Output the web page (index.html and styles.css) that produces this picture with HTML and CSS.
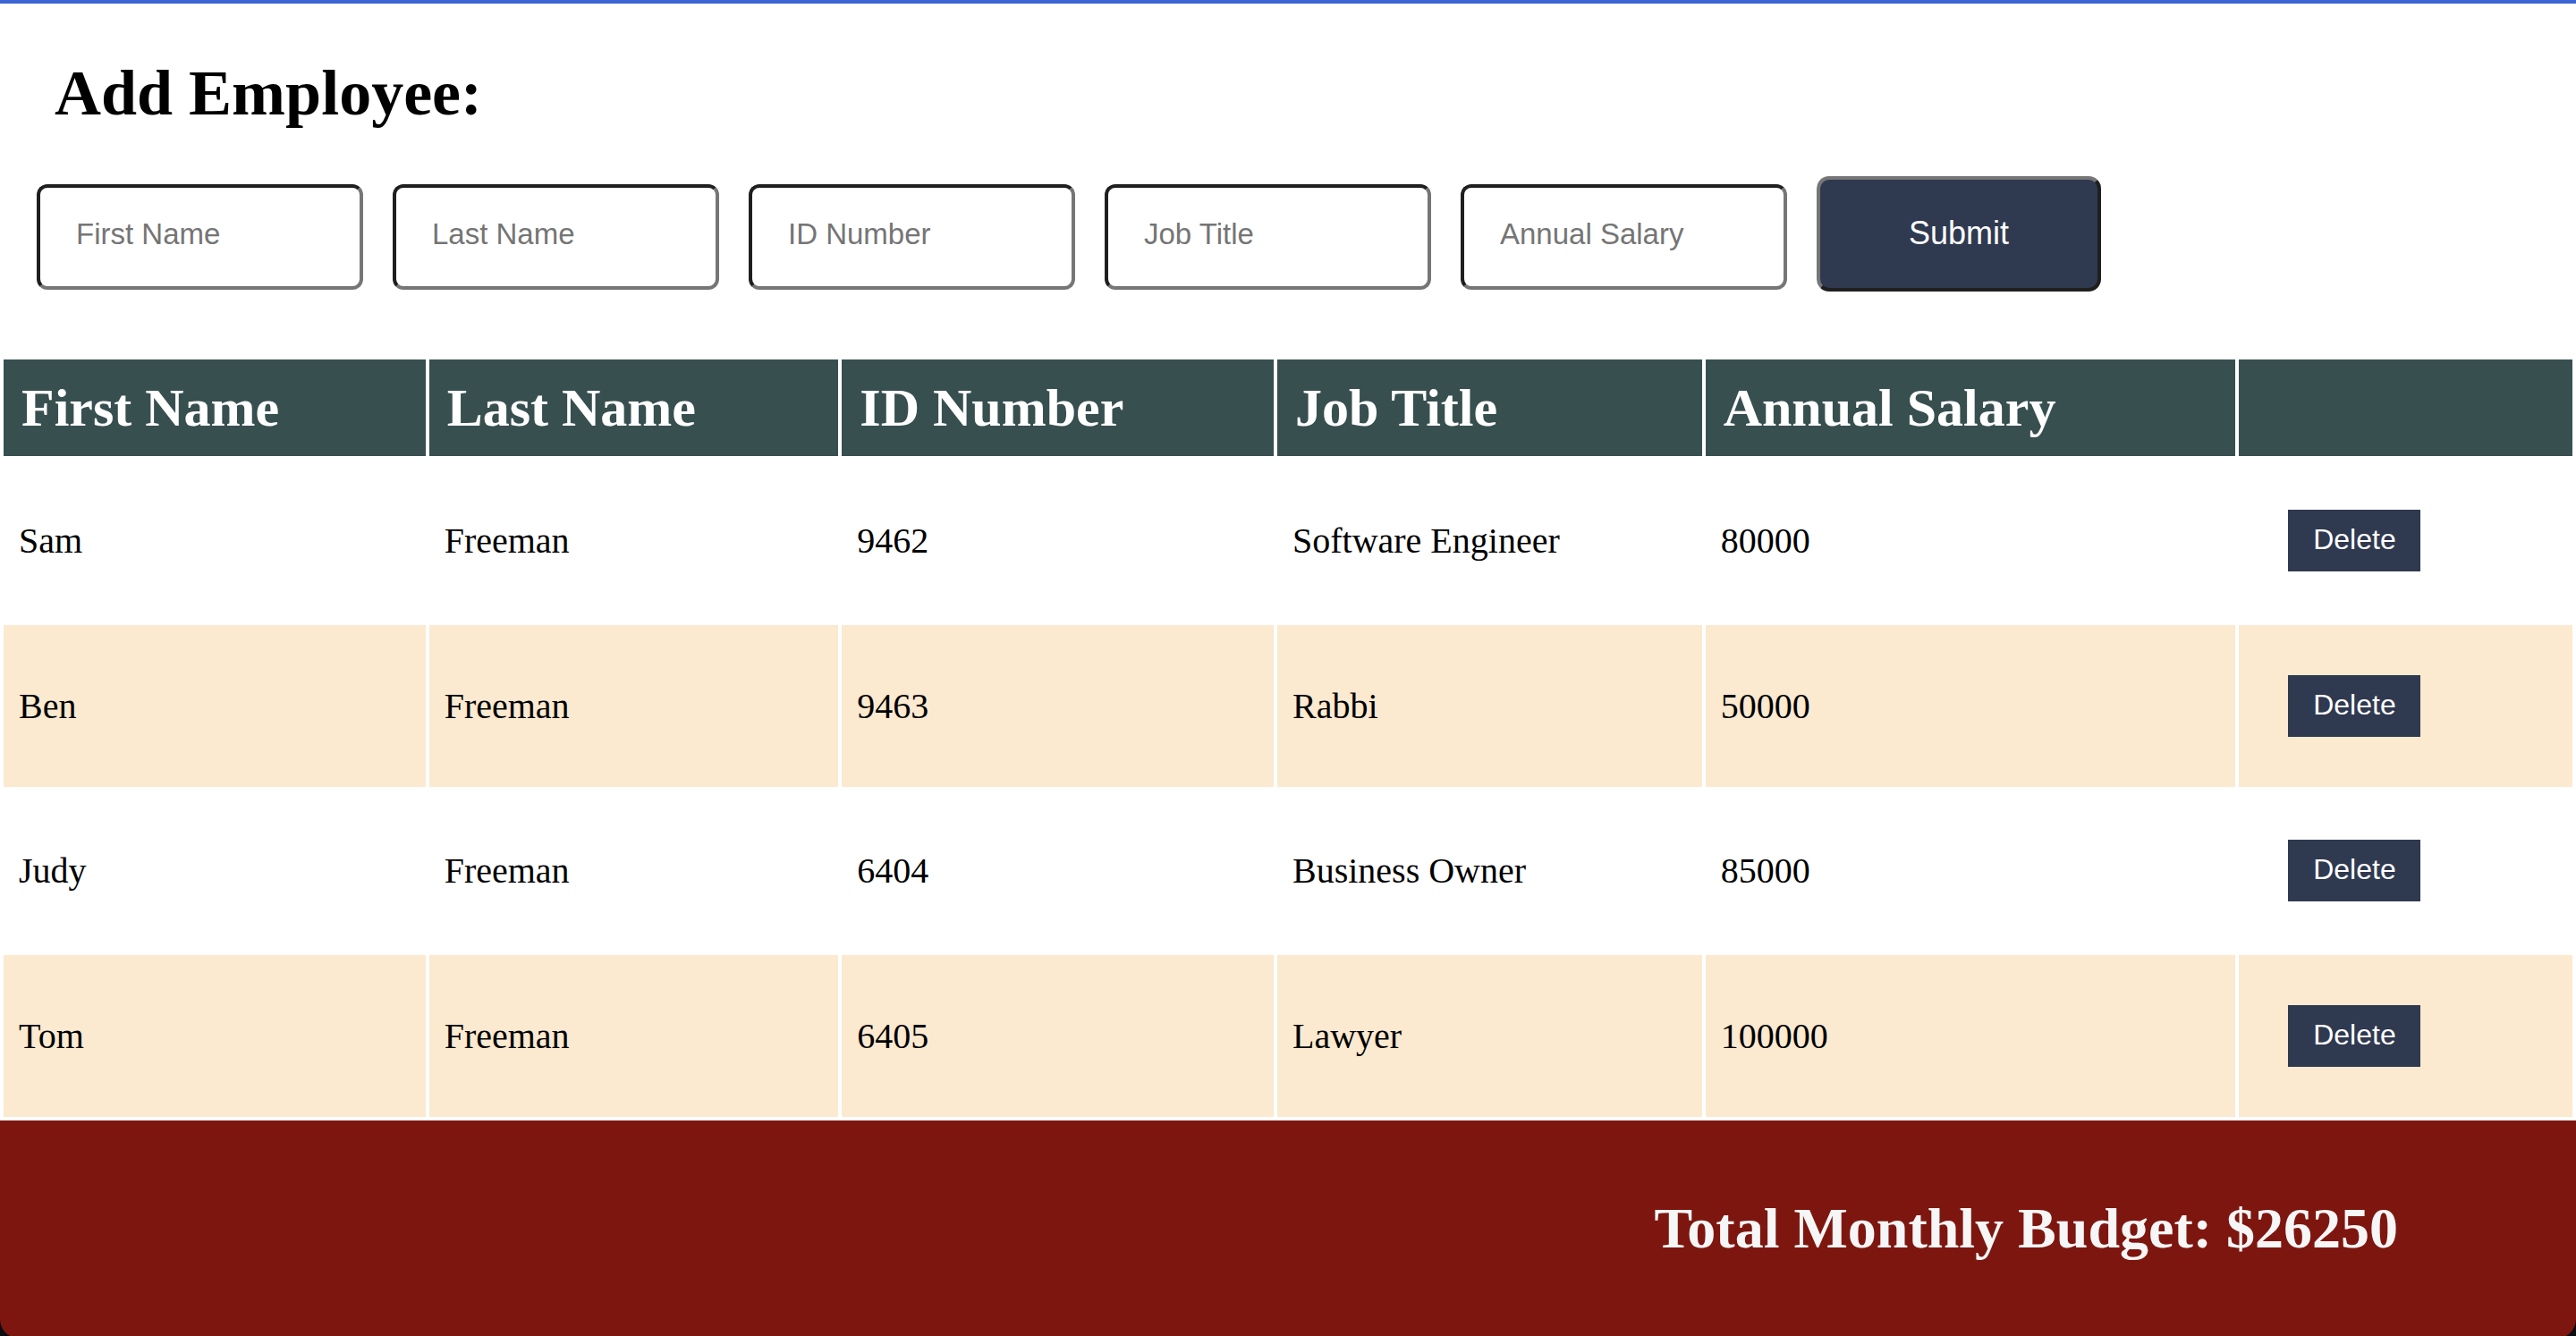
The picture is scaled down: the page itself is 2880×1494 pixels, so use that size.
FILE: index.html
```html
<!DOCTYPE html>
<html lang="en">
<head>
<meta charset="utf-8">
<title>Employee Salary Calculator</title>
<link rel="stylesheet" href="styles.css">
</head>
<body>
<header class="add-section">
  <h1 class="title">Add Employee:</h1>
  <form class="add-form">
    <input class="field" type="text" placeholder="First Name">
    <input class="field" type="text" placeholder="Last Name">
    <input class="field" type="text" placeholder="ID Number">
    <input class="field" type="text" placeholder="Job Title">
    <input class="field" type="text" placeholder="Annual Salary">
    <button class="submit-btn" type="button">Submit</button>
  </form>
</header>
<table class="emp-table">
  <colgroup>
    <col class="c1"><col class="c2"><col class="c3"><col class="c4"><col class="c5"><col class="c6">
  </colgroup>
  <thead>
    <tr>
      <th>First Name</th><th>Last Name</th><th>ID Number</th><th>Job Title</th><th>Annual Salary</th><th></th>
    </tr>
  </thead>
  <tbody>
    <tr>
      <td>Sam</td><td>Freeman</td><td>9462</td><td>Software Engineer</td><td>80000</td>
      <td><button class="delete-btn" type="button">Delete</button></td>
    </tr>
    <tr class="alt">
      <td>Ben</td><td>Freeman</td><td>9463</td><td>Rabbi</td><td>50000</td>
      <td><button class="delete-btn" type="button">Delete</button></td>
    </tr>
    <tr>
      <td>Judy</td><td>Freeman</td><td>6404</td><td>Business Owner</td><td>85000</td>
      <td><button class="delete-btn" type="button">Delete</button></td>
    </tr>
    <tr class="alt">
      <td>Tom</td><td>Freeman</td><td>6405</td><td>Lawyer</td><td>100000</td>
      <td><button class="delete-btn" type="button">Delete</button></td>
    </tr>
  </tbody>
</table>
<div class="footer-wrap">
  <footer class="budget">Total Monthly Budget: $26250</footer>
</div>
</body>
</html>
```
FILE: styles.css
```css
* {
  box-sizing: border-box;
}

html {
  background: #ffffff;
}

body {
  margin: 0;
  border-top: 4px solid #3c64d4;
  background: #ffffff;
  font-family: "Liberation Serif", "Times New Roman", serif;
  color: #000000;
}

.add-section {
  padding-left: 41px;
}

.title {
  margin: 60px 0 0 0;
  padding-left: 20px;
  font-size: 72px;
  line-height: 80px;
  font-weight: bold;
}

.add-form {
  display: flex;
  align-items: flex-start;
  margin: 53px 0 0 0;
}

.field {
  width: 365px;
  height: 118px;
  margin: 9px 33px 0 0;
  padding: 0 20px 6px 40px;
  border: 4px solid;
  border-color: #1f1f1f #767676 #767676 #1f1f1f;
  border-radius: 12px;
  background: #ffffff;
  font-family: "Liberation Sans", Arial, sans-serif;
  font-size: 33px;
  color: #000000;
  outline: none;
}

.field::placeholder {
  color: #757575;
  opacity: 1;
}

.submit-btn {
  width: 318px;
  height: 129px;
  padding: 0 0 2px 0;
  border: 4px solid;
  border-color: #767676 #1f1f1f #1f1f1f #767676;
  border-radius: 14px;
  background: #2f3950;
  color: #ffffff;
  font-family: "Liberation Sans", Arial, sans-serif;
  font-size: 36px;
}

.emp-table {
  width: 100%;
  margin-top: 72px;
  border-collapse: separate;
  border-spacing: 4.5px;
  table-layout: fixed;
}

.c1 { width: 471px; }
.c2 { width: 457px; }
.c3 { width: 482px; }
.c4 { width: 474px; }
.c5 { width: 592px; }
.c6 { width: 372px; }

.emp-table th {
  padding: 20px 20px;
  background: #384f50;
  color: #ffffff;
  font-size: 60px;
  line-height: 68px;
  font-weight: bold;
  text-align: left;
  white-space: nowrap;
}

.emp-table td {
  height: 180.75px;
  padding: 0 17px;
  font-size: 40px;
  vertical-align: middle;
  white-space: nowrap;
}

.emp-table tr.alt td {
  background: #fbe9d0;
}

.delete-btn {
  width: 148px;
  height: 69px;
  margin-left: 38px;
  padding: 0 0 2px 0;
  border: none;
  background: #2f3950;
  color: #ffffff;
  font-family: "Liberation Sans", Arial, sans-serif;
  font-size: 32px;
}

.footer-wrap {
  background: #0b0d12;
}

.budget {
  height: 244px;
  padding-right: 199px;
  background: #7e1610;
  border-radius: 0 0 22px 22px;
  color: #f6f6f6;
  font-size: 64px;
  font-weight: bold;
  line-height: 242px;
  text-align: right;
}
```
